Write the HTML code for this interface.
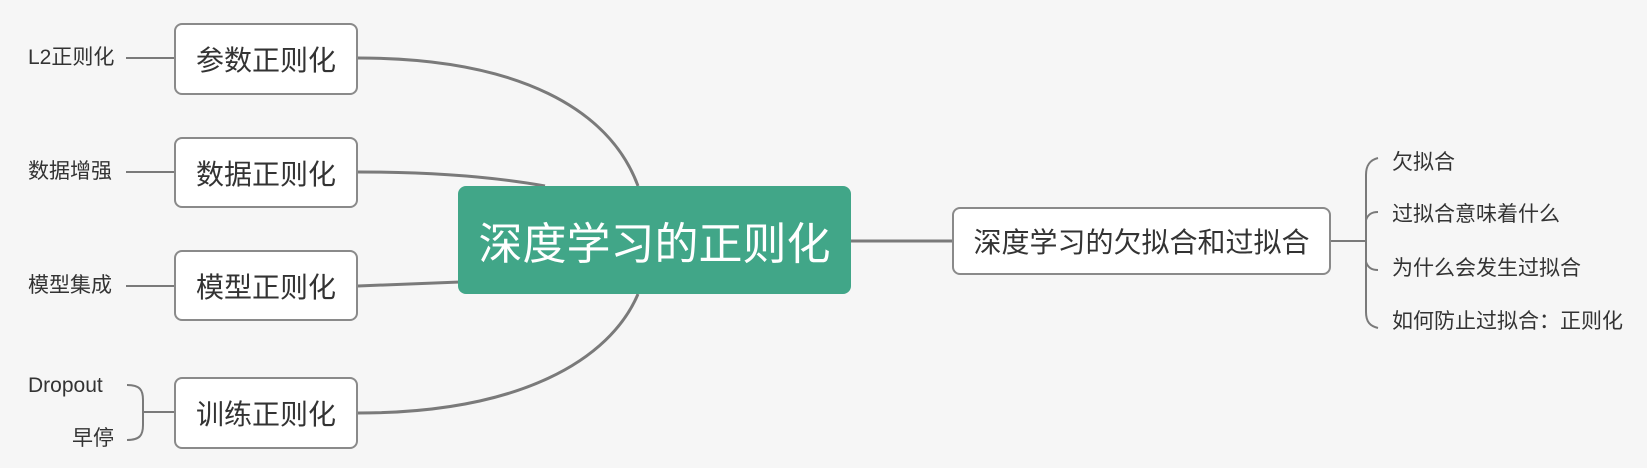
<!DOCTYPE html>
<html><head><meta charset="utf-8"><style>
body{margin:0;width:1647px;height:468px;background:#f6f6f6;position:relative;overflow:hidden;font-family:"Liberation Sans","Noto Sans CJK SC",sans-serif;color:#333}
.b{position:absolute;background:#fff;border:2px solid #8a8a8a;border-radius:8px;box-sizing:border-box;display:flex;align-items:center;justify-content:center;font-size:28px;color:#333}
.t{position:absolute;font-size:21px;color:#333;line-height:1;white-space:nowrap}
.c{position:absolute;left:458px;top:186px;width:393px;height:108px;background:#41a688;border-radius:8px;color:#fff;font-size:44px;display:flex;align-items:center;justify-content:center}
svg{position:absolute;left:0;top:0}
</style></head><body>
<svg width="1647" height="468" fill="none" stroke="#7a7a7a" stroke-width="3">
<path d="M358 58 C520 58 610 110 638 186"/>
<path d="M358 172 C440 172 500 178 545 186"/>
<path d="M358 286 L460 282"/>
<path d="M358 413 C520 413 610 360 638 294"/>
<path d="M851 241 L952 241"/>
<g stroke-width="2">
<path d="M126 58 L174 58"/><path d="M126 172 L174 172"/><path d="M126 286 L174 286"/>
<path d="M127 385 C140 385 143 390 143 400 L143 425 C143 435 140 440 127 440"/><path d="M143 412 L174 412"/>
<path d="M1331 241 L1366 241"/>
<path d="M1378 158 C1370 160 1366 165 1366 175 L1366 312 C1366 322 1370 326 1378 328"/>
<path d="M1366 220 C1368 214 1372 212 1378 212"/>
<path d="M1366 262 C1368 268 1372 270 1378 270"/>
</g>
</svg>
<div class="b" style="left:174px;top:23px;width:184px;height:72px">参数正则化</div>
<div class="b" style="left:174px;top:137px;width:184px;height:71px">数据正则化</div>
<div class="b" style="left:174px;top:250px;width:184px;height:71px">模型正则化</div>
<div class="b" style="left:174px;top:377px;width:184px;height:72px">训练正则化</div>
<div class="c">深度学习的正则化</div>
<div class="b" style="left:952px;top:207px;width:379px;height:68px">深度学习的欠拟合和过拟合</div>
<div class="t" style="left:28px;top:47px">L2正则化</div>
<div class="t" style="left:28px;top:161px">数据增强</div>
<div class="t" style="left:28px;top:275px">模型集成</div>
<div class="t" style="left:28px;top:375px">Dropout</div>
<div class="t" style="left:72px;top:428px">早停</div>
<div class="t" style="left:1392px;top:152px">欠拟合</div>
<div class="t" style="left:1392px;top:204px">过拟合意味着什么</div>
<div class="t" style="left:1392px;top:258px">为什么会发生过拟合</div>
<div class="t" style="left:1392px;top:311px">如何防止过拟合：正则化</div>
</body></html>
